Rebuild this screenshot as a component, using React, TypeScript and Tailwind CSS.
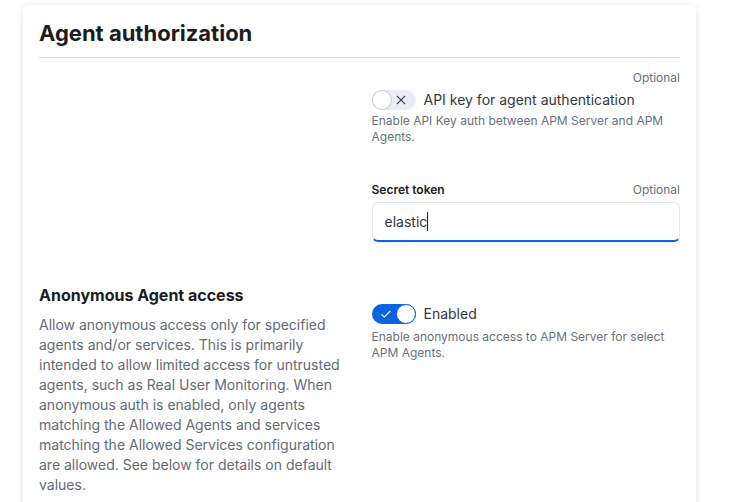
import React from "react";

function Switch({ on, label }: { on: boolean; label: string }) {
  return (
    <div className="flex items-center gap-2">
      <span
        className={`relative flex h-5 w-11 shrink-0 items-center rounded-full ${
          on ? "bg-[#0b64dd]" : "bg-[#e9edf3]"
        }`}
      >
        {on ? (
          <svg className="absolute left-[7px]" width="14" height="14" viewBox="0 0 16 16" fill="none">
            <path d="M3 8.5l3 3 7-7" stroke="white" strokeWidth="1.3" />
          </svg>
        ) : (
          <svg className="absolute right-[9px]" width="12" height="12" viewBox="0 0 16 16" fill="none">
            <path d="M2.5 2.5l11 11M13.5 2.5l-11 11" stroke="#343741" strokeWidth="1.5" />
          </svg>
        )}
        <span
          className={`absolute top-0 h-5 w-5 rounded-full border bg-white ${
            on ? "right-0 border-[#0b64dd]" : "left-0 border-[#c5ccd8]"
          }`}
        />
      </span>
      <span className="text-[14px] text-[#343741]">{label}</span>
    </div>
  );
}

export default function App() {
  return (
    <main className="h-[502px] overflow-hidden bg-white pl-[23px] pt-[5px] font-['Inter',sans-serif]">
      <div className="w-[673px] rounded-md bg-white px-4 pt-4 pb-10 shadow-[0_1px_6px_rgba(0,0,0,0.1),0_4px_12px_rgba(0,0,0,0.04)]">
        <h2 className="text-[22px] font-bold leading-[24px] text-[#1a1c21]">Agent authorization</h2>
        <div className="mt-[12px] h-px bg-[#d3dae6]" />

        <div className="flex gap-6 pt-[12px]">
          <div className="flex-1" />
          <div className="flex-1">
            <div className="flex justify-end text-[12px] leading-[16px] text-[#69707d]">Optional</div>
            <div className="mt-[3px]">
              <Switch on={false} label="API key for agent authentication" />
            </div>
            <p className="mt-[3px] text-[12px] leading-[16px] text-[#69707d]">
              Enable API Key auth between APM Server and APM Agents.
            </p>

            <div className="mt-[37px] flex items-center justify-between text-[12px] leading-[16px]">
              <span className="font-semibold text-[#1a1c21]">Secret token</span>
              <span className="text-[#69707d]">Optional</span>
            </div>
            <div className="mt-[4px] flex h-10 items-center rounded-md border border-[#e3e6ed] border-b-2 border-b-[#0b64dd] px-3 text-[14px] text-[#343741]">
              elastic<span className="h-[19px] w-px bg-[#1a1c21]" />
            </div>
          </div>
        </div>

        <div className="flex gap-6 pt-[41px]">
          <div className="flex-1">
            <h3 className="text-[16px] font-bold leading-[24px] text-[#1a1c21]">Anonymous Agent access</h3>
            <p className="mt-[8px] text-[14px] leading-[20px] text-[#646a77]">
              Allow anonymous access only for specified agents and/or services. This is primarily intended to
              allow limited access for untrusted agents, such as Real User Monitoring. When anonymous auth is
              enabled, only agents matching the Allowed Agents and services matching the Allowed Services
              configuration are allowed. See below for details on default values.
            </p>
          </div>
          <div className="flex-1 pt-[20px]">
            <Switch on={true} label="Enabled" />
            <p className="mt-[5px] text-[12px] leading-[16px] text-[#69707d]">
              Enable anonymous access to APM Server for select APM Agents.
            </p>
          </div>
        </div>
      </div>
    </main>
  );
}
